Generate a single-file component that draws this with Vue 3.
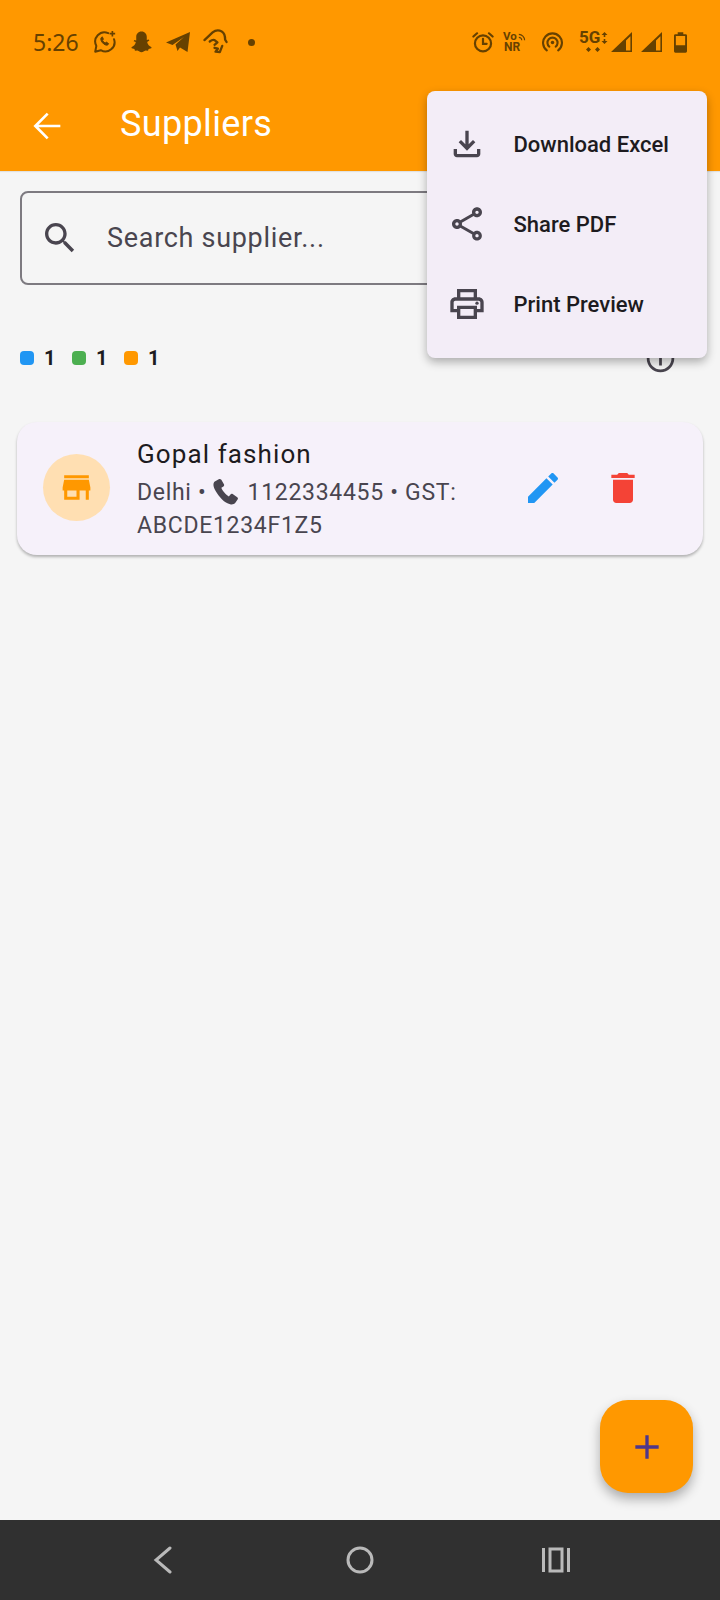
<script setup>
const menu = [
  { label: 'Download Excel', icon: 'download' },
  { label: 'Share PDF', icon: 'share' },
  { label: 'Print Preview', icon: 'print' },
]
const counts = [
  { cls: 'blue', n: 1 },
  { cls: 'green', n: 1 },
  { cls: 'orange', n: 1 },
]
</script>

<template>
  <div class="page">
    <header class="appbar">
      <div class="status">
        <div class="status-left">
          <span class="time">5:26</span>
          <svg class="si s-wa" viewBox="0 0 26 26" fill="none" stroke="#664100" stroke-width="2.2">
            <path d="M16.500 3.400A10 10 0 0 0 3.600 17.200L2.400 23.500l6-1.600A10 10 0 0 0 22.800 10" stroke-linejoin="round" stroke-linecap="round"/>
            <path d="M9 8.200c-1 1-.8 3 1 5.300 2 2.500 4.500 3.500 6 2.700l.9-1.500-2.500-1.600-1.200 1c-1.200-.5-2.400-1.800-2.900-3l1-1.200-1.200-2.500z" fill="#664100" stroke-width="1"/>
            <path d="M21 1v6M18 4h6" stroke-width="1.800"/>
          </svg>
          <svg class="si s-snap" viewBox="0 0 24 24" fill="#664100">
            <path d="M12 1c3.600 0 5.500 2.700 5.500 5.600v3.300l2-.6.700 1.200-2.300 1.600c.5 2.500 2.200 4.400 4.600 5.400l-.3 1.100-2.800.8-.6 1.700-2.600-.2c-1.500.4-2.500 1.900-4.200 1.900s-2.700-1.500-4.200-1.900l-2.600.2-.6-1.700-2.800-.8-.3-1.100c2.400-1 4.100-2.900 4.600-5.400L3.800 11.100l.7-1.200 2 .6V6.600C6.500 3.700 8.400 1 12 1z"/>
          </svg>
          <svg class="si s-tg" viewBox="0 0 24 20" fill="#664100">
            <path d="M0 10.500 24 0l-2.500 20-7.500-4.500-2.500 3.500-2-6.500L18 5 6.500 13z"/>
          </svg>
          <svg class="si s-hook" viewBox="0 0 26 26" fill="none" stroke="#664100" stroke-width="2.400" stroke-linecap="round" stroke-linejoin="round">
            <path d="M1.500 11 10 3c2.500-2 6.500-2.500 9.500-1 3 1.700 3.500 5 3.500 8.500l1.500 2.500"/>
            <path d="M7 12.500c2-1.500 3.500-2 5-1.500l3 2.500-3 2.500M20 17l-2.500 6.500-4.500-.5 2.500-3-3.500-1"/>
          </svg>
          <span class="dot"></span>
        </div>
        <div class="status-right">
          <svg class="sr s-alarm" viewBox="0 0 24 24" fill="none" stroke="#664100" stroke-width="2.400">
            <circle cx="12" cy="13.500" r="8.800"/>
            <path d="M12 8.500v5.500h4M1.500 6 5.500 2.500M22.500 6l-4-3.500" stroke-linecap="round"/>
          </svg>
          <div class="vonr">
            <span class="vo">Vo<svg viewBox="0 0 10 10" fill="none" stroke="#664100" stroke-width="1.400"><path d="M1 2.500a7 7 0 0 1 7 7M1 6a3.500 3.500 0 0 1 3.500 3.500"/></svg></span>
            <span class="nr">NR</span>
          </div>
          <svg class="sr s-hot" viewBox="0 0 24 24" fill="none" stroke="#664100" stroke-width="2.400" stroke-linecap="round">
            <path d="M5.500 21A10.800 10.800 0 1 1 18.500 21"/>
            <path d="M8.400 16.800A5.800 5.800 0 1 1 15.600 16.800"/>
            <circle cx="12" cy="12" r="2" fill="#664100" stroke="none"/>
          </svg>
          <div class="fiveg">
            <span class="fg-text">5G</span>
            <svg class="fg-arrows" viewBox="0 0 7 12" fill="#664100">
              <path d="M3.500 0 6.500 3H4.300v2H2.700V3H.5zM2.700 7h1.600v2h2.200l-3 3-3-3h2.200z"/>
            </svg>
            <svg class="fg-diamonds" viewBox="0 0 14 5" fill="#664100">
              <path d="M2.500 0 5 2.500 2.500 5 0 2.500zM11.500 0 14 2.500 11.500 5 9 2.500z"/>
            </svg>
          </div>
          <svg class="sr s-sig" viewBox="1 1 21 20" fill="#664100">
            <path d="M1 21 22 1v20zM16 19.400h4.400V5.200L16 9.600z" fill-rule="evenodd"/>
          </svg>
          <svg class="sr s-sig" viewBox="1 1 21 20" fill="#664100">
            <path d="M1 21 22 1v20zM16 19.400h4.400V5.200L16 9.600z" fill-rule="evenodd"/>
          </svg>
          <svg class="sr s-bat" viewBox="0 0 14 22" fill="#664100">
            <path d="M4 0h6v2h2.500A1.500 1.500 0 0 1 14 3.500v17a1.500 1.500 0 0 1-1.500 1.500h-11A1.500 1.500 0 0 1 0 20.500v-17A1.500 1.500 0 0 1 1.500 2H4zM2 4v10h10V4z" fill-rule="evenodd"/>
          </svg>
        </div>
      </div>
      <div class="toolbar">
        <svg class="back" viewBox="0 0 24 24" fill="none" stroke="#fff" stroke-width="1.600">
          <path d="M20 12H5.200M12.400 4.600 5 12l7.400 7.400"/>
        </svg>
        <h1>Suppliers</h1>
      </div>
    </header>

    <main class="content">
      <div class="search">
        <svg class="search-icon" viewBox="0 0 24 24" fill="#49454f">
          <path d="M15.500 14h-.79l-.28-.27C15.410 12.590 16 11.110 16 9.500 16 5.910 13.090 3 9.500 3S3 5.910 3 9.500 5.910 16 9.500 16c1.610 0 3.090-.59 4.230-1.570l.27.28v.79l5 4.990L20.490 19l-4.990-5zm-6 0C7.010 14 5 11.990 5 9.500S7.010 5 9.500 5 14 7.010 14 9.500 11.990 14 9.500 14z"/>
        </svg>
        <span class="placeholder">Search supplier...</span>
      </div>

      <div class="summary">
        <div class="counts">
          <div v-for="c in counts" :key="c.cls" class="count">
            <i :class="['swatch', c.cls]"></i>
            <b>{{ c.n }}</b>
          </div>
        </div>
        <svg class="info" viewBox="0 0 24 24" fill="#49454f">
          <path d="M11 7h2v2h-2zm0 4h2v6h-2zm1-9C6.480 2 2 6.480 2 12s4.480 10 10 10 10-4.480 10-10S17.520 2 12 2zm0 18c-4.410 0-8-3.590-8-8s3.590-8 8-8 8 3.590 8 8-3.590 8-8 8z"/>
        </svg>
      </div>

      <article class="card">
        <div class="avatar">
          <svg viewBox="0 0 24 24" fill="#ff9800">
            <path d="M20 4H4v2h16V4zm1 10v-2l-1-5H4l-1 5v2h1v6h10v-6h4v6h2v-6h1zm-9 4H6v-4h6v4z"/>
          </svg>
        </div>
        <div class="info-col">
          <h2>Gopal fashion</h2>
          <p class="line">Delhi •<svg class="phone" viewBox="0 0 26 26" fill="#49454f">
              <path d="M6.500 1.200 2.700 3.400C.9 4.700.8 8 3.500 12.500c3.500 6 8.500 11.500 14 12.800 2 .5 4-.2 5-1.500l2.300-3.300c.4-.7.200-1.500-.5-2l-4.400-3c-.8-.5-1.600-.3-2.100.3l-1.600 2c-2.200-1-6.300-5.500-7.200-8.300l2-1.400c.7-.5.900-1.400.5-2.100L9 1.800c-.6-.8-1.600-1-2.500-.6z"/>
            </svg>1122334455 • GST:</p>
          <p class="line">ABCDE1234F1Z5</p>
        </div>
        <div class="actions">
          <svg class="act" viewBox="0 0 24 24" fill="#2196f3">
            <path d="M3 17.250V21h3.750L17.810 9.940l-3.750-3.750L3 17.250zM20.710 7.040c.39-.39.39-1.020 0-1.410l-2.340-2.340c-.39-.39-1.020-.39-1.410 0l-1.830 1.830 3.750 3.750 1.830-1.830z"/>
          </svg>
          <svg class="act" viewBox="0 0 24 24" fill="#f44336">
            <path d="M6 19c0 1.100.9 2 2 2h8c1.100 0 2-.9 2-2V7H6v12zM19 4h-3.500l-1-1h-5l-1 1H5v2h14V4z"/>
          </svg>
        </div>
      </article>
    </main>

    <button class="fab" aria-label="Add">
      <svg viewBox="0 0 24 24" fill="#4f378b">
        <path d="M19 13h-6v6h-2v-6H5v-2h6V5h2v6h6v2z"/>
      </svg>
    </button>

    <div class="menu">
      <div v-for="m in menu" :key="m.label" class="menu-item">
        <svg v-if="m.icon === 'download'" class="menu-icon" viewBox="0 0 24 24" fill="#49454f">
          <path d="M18 15v3H6v-3H4v3c0 1.100.9 2 2 2h12c1.100 0 2-.9 2-2v-3h-2zm-1-4-1.410-1.410L13 12.170V4h-2v8.170L8.410 9.590 7 11l5 5 5-5z"/>
        </svg>
        <svg v-else-if="m.icon === 'share'" class="menu-icon" viewBox="0 0 24 24" fill="#49454f">
          <path d="M18 16.080c-.76 0-1.440.3-1.960.77L8.910 12.700c.05-.23.09-.46.09-.7s-.04-.47-.09-.7l7.050-4.110c.54.5 1.250.81 2.040.81 1.660 0 3-1.340 3-3s-1.340-3-3-3-3 1.340-3 3c0 .24.04.47.09.7L8.040 9.810C7.500 9.310 6.790 9 6 9c-1.660 0-3 1.340-3 3s1.340 3 3 3c.79 0 1.500-.31 2.040-.81l7.120 4.160c-.05.21-.08.43-.08.65 0 1.610 1.310 2.920 2.920 2.920s2.920-1.310 2.920-2.920-1.310-2.920-2.920-2.920zM18 4c.55 0 1 .45 1 1s-.45 1-1 1-1-.45-1-1 .45-1 1-1zM6 13c-.55 0-1-.45-1-1s.45-1 1-1 1 .45 1 1-.45 1-1 1zm12 7.020c-.55 0-1-.45-1-1s.45-1 1-1 1 .45 1 1-.45 1-1 1z"/>
        </svg>
        <svg v-else class="menu-icon" viewBox="0 0 24 24" fill="#49454f">
          <path d="M19 8h-1V3H6v5H5c-1.660 0-3 1.340-3 3v6h4v4h12v-4h4v-6c0-1.660-1.340-3-3-3zM8 5h8v3H8V5zm8 12v2H8v-4h8v2zm2-2v-2H6v2H4v-4c0-.55.45-1 1-1h14c.55 0 1 .45 1 1v4h-2z"/>
          <circle cx="18" cy="11.500" r="1"/>
        </svg>
        <span class="menu-label">{{ m.label }}</span>
      </div>
    </div>

    <footer class="navbar">
      <svg class="nav-back" viewBox="0 0 20 28" fill="none" stroke="#b9b9b9" stroke-width="3" stroke-linecap="round">
        <path d="M17 2 3 14l14 12"/>
      </svg>
      <svg class="nav-home" viewBox="0 0 28 28" fill="none" stroke="#b9b9b9" stroke-width="3">
        <circle cx="14" cy="14" r="12"/>
      </svg>
      <svg class="nav-recent" viewBox="0 0 28 26" fill="none" stroke="#b9b9b9" stroke-width="3">
        <path d="M1.500 1v24M26.500 1v24"/>
        <rect x="8" y="2" width="12" height="22"/>
      </svg>
    </footer>
  </div>
</template>

<style scoped>
.page {
  position: relative;
  width: 720px;
  height: 1600px;
  background: #f5f5f5;
  font-family: Roboto, "Noto Sans", sans-serif;
  display: flex;
  flex-direction: column;
  overflow: hidden;
}
.appbar {
  background: #ff9800;
  height: 171px;
  flex: none;
  box-shadow: 0 1px 1px rgba(0, 0, 0, .08);
}
.status {
  height: 84px;
  display: flex;
  justify-content: space-between;
  align-items: center;
  padding: 0 33px 2px 34px;
}
.status-left, .status-right {
  display: flex;
  align-items: center;
}
.time {
  font-family: "Noto Sans", sans-serif;
  font-size: 23px;
  color: #664100;
  width: 59px;
  margin-left: -1px;
  padding-right: 1px;
}
.si { width: 24px; height: 24px; margin-right: 13px; }
.s-snap { width: 23px; }
.s-tg { width: 24px; height: 20px; }
.s-hook { width: 25px; height: 26px; margin-right: 20px; margin-bottom: 1px; }
.dot { width: 7px; height: 7px; border-radius: 50%; background: #664100; }
.s-alarm { width: 22px; height: 22px; margin-right: 9px; }
.vonr {
  display: flex;
  flex-direction: column;
  width: 23px;
  margin-right: 16px;
  font-weight: 700;
  color: #664100;
}
.vo {
  display: flex;
  align-items: center;
  font-size: 11.500px;
  line-height: 11px;
}
.vo svg { width: 9px; height: 9px; margin-left: 1px; }
.nr {
  font-size: 12px;
  line-height: 11px;
  margin-left: 1px;
}
.s-hot { width: 21px; height: 21px; margin-right: 16px; }
.fiveg {
  width: 32px;
  height: 22px;
  display: grid;
  grid-template-columns: 21px 7px;
  grid-template-rows: 13px 5px;
  column-gap: 1px;
  row-gap: 3px;
  align-items: center;
}
.fg-text {
  font-size: 17px;
  line-height: 13px;
  font-weight: 700;
  color: #664100;
}
.fg-arrows { width: 7px; height: 12px; }
.fg-diamonds {
  grid-column: 1 / 3;
  width: 14px;
  height: 5px;
  margin-left: 7px;
}
.s-sig { width: 21px; height: 20px; }
.s-sig + .s-sig { margin-left: 9px; }
.s-bat { width: 13px; height: 21px; margin-left: 12px; }
.toolbar {
  height: 80px;
  display: flex;
  align-items: center;
  padding: 0 0 4px 27px;
  box-sizing: border-box;
}
.back { width: 40px; height: 40px; margin-top: 4px; }
h1 {
  margin: 0 0 0 53px;
  font-size: 36px;
  font-weight: 400;
  letter-spacing: .35px;
  color: #fff;
}
.content {
  flex: 1;
  padding: 20px 17px 0;
  display: flex;
  flex-direction: column;
}
.search {
  height: 94px;
  margin: 0 3px;
  box-sizing: border-box;
  border: 2px solid #7d7a80;
  border-radius: 8px;
  display: flex;
  align-items: center;
  padding-left: 18px;
}
.search-icon { width: 40px; height: 40px; }
.placeholder {
  margin-left: 27px;
  font-size: 27px;
  letter-spacing: .7px;
  color: #49454f;
}
.summary {
  margin: 58px 3px 0;
  height: 30px;
  display: flex;
  justify-content: space-between;
  align-items: center;
  padding-right: 23px;
}
.counts { display: flex; gap: 17px; }
.count { display: flex; align-items: center; gap: 10px; }
.swatch { width: 14px; height: 14px; border-radius: 4px; }
.blue { background: #2196f3; }
.green { background: #4caf50; }
.orange { background: #ff9800; }
.count b { font-size: 20px; font-weight: 700; color: #1d1b20; width: 11px; }
.info { width: 33px; height: 33px; flex: none; }
.card {
  margin-top: 49px;
  height: 133px;
  box-sizing: border-box;
  background: #f6f1fa;
  border-radius: 20px;
  box-shadow: 0 2px 3px rgba(0, 0, 0, .28);
  display: flex;
  align-items: center;
  padding: 0 0 2px 26px;
}
.avatar {
  width: 67px;
  height: 67px;
  flex: none;
  border-radius: 50%;
  background: #ffdfb2;
  display: flex;
  align-items: center;
  justify-content: center;
}
.avatar svg { width: 37px; height: 37px; }
.info-col { width: 350px; margin-left: 27px; padding-top: 5px; }
h2 {
  margin: -1px 0 6px;
  font-size: 26px;
  line-height: 32px;
  font-weight: 400;
  letter-spacing: 1.100px;
  color: #1d1b20;
}
.line {
  margin: 0;
  font-size: 23px;
  line-height: 33px;
  letter-spacing: .7px;
  color: #49454f;
  white-space: nowrap;
}
.phone { width: 27px; height: 27px; vertical-align: -5px; margin: 0 9px 0 5px; }
.actions {
  display: flex;
  align-items: center;
  margin-left: 36px;
  gap: 40px;
}
.act { width: 40px; height: 40px; }
.fab {
  position: absolute;
  left: 600px;
  top: 1400px;
  width: 93px;
  height: 93px;
  padding: 0;
  border: 0;
  border-radius: 28px;
  background: #ff9800;
  box-shadow: 0 6px 12px rgba(0, 0, 0, .3);
  display: flex;
  align-items: center;
  justify-content: center;
}
.fab svg { width: 40px; height: 40px; }
.menu {
  position: absolute;
  left: 427px;
  top: 91px;
  width: 280px;
  height: 267px;
  box-sizing: border-box;
  padding: 13px 0;
  background: #f3edf7;
  border-radius: 8px;
  box-shadow: 0 4px 10px rgba(0, 0, 0, .3);
}
.menu-item {
  height: 80px;
  display: flex;
  align-items: center;
  padding-left: 20px;
}
.menu-icon { width: 40px; height: 40px; flex: none; }
.menu-label {
  margin-left: 26.500px;
  font-size: 22px;
  font-weight: 490;
  color: #1d1b20;
}
.navbar {
  height: 80px;
  flex: none;
  background: #303030;
  display: flex;
  align-items: center;
  justify-content: center;
  position: relative;
}
.nav-back { position: absolute; left: 153px; width: 20px; height: 28px; }
.nav-home { width: 28px; height: 28px; }
.nav-recent { position: absolute; left: 542px; width: 28px; height: 26px; }
</style>
